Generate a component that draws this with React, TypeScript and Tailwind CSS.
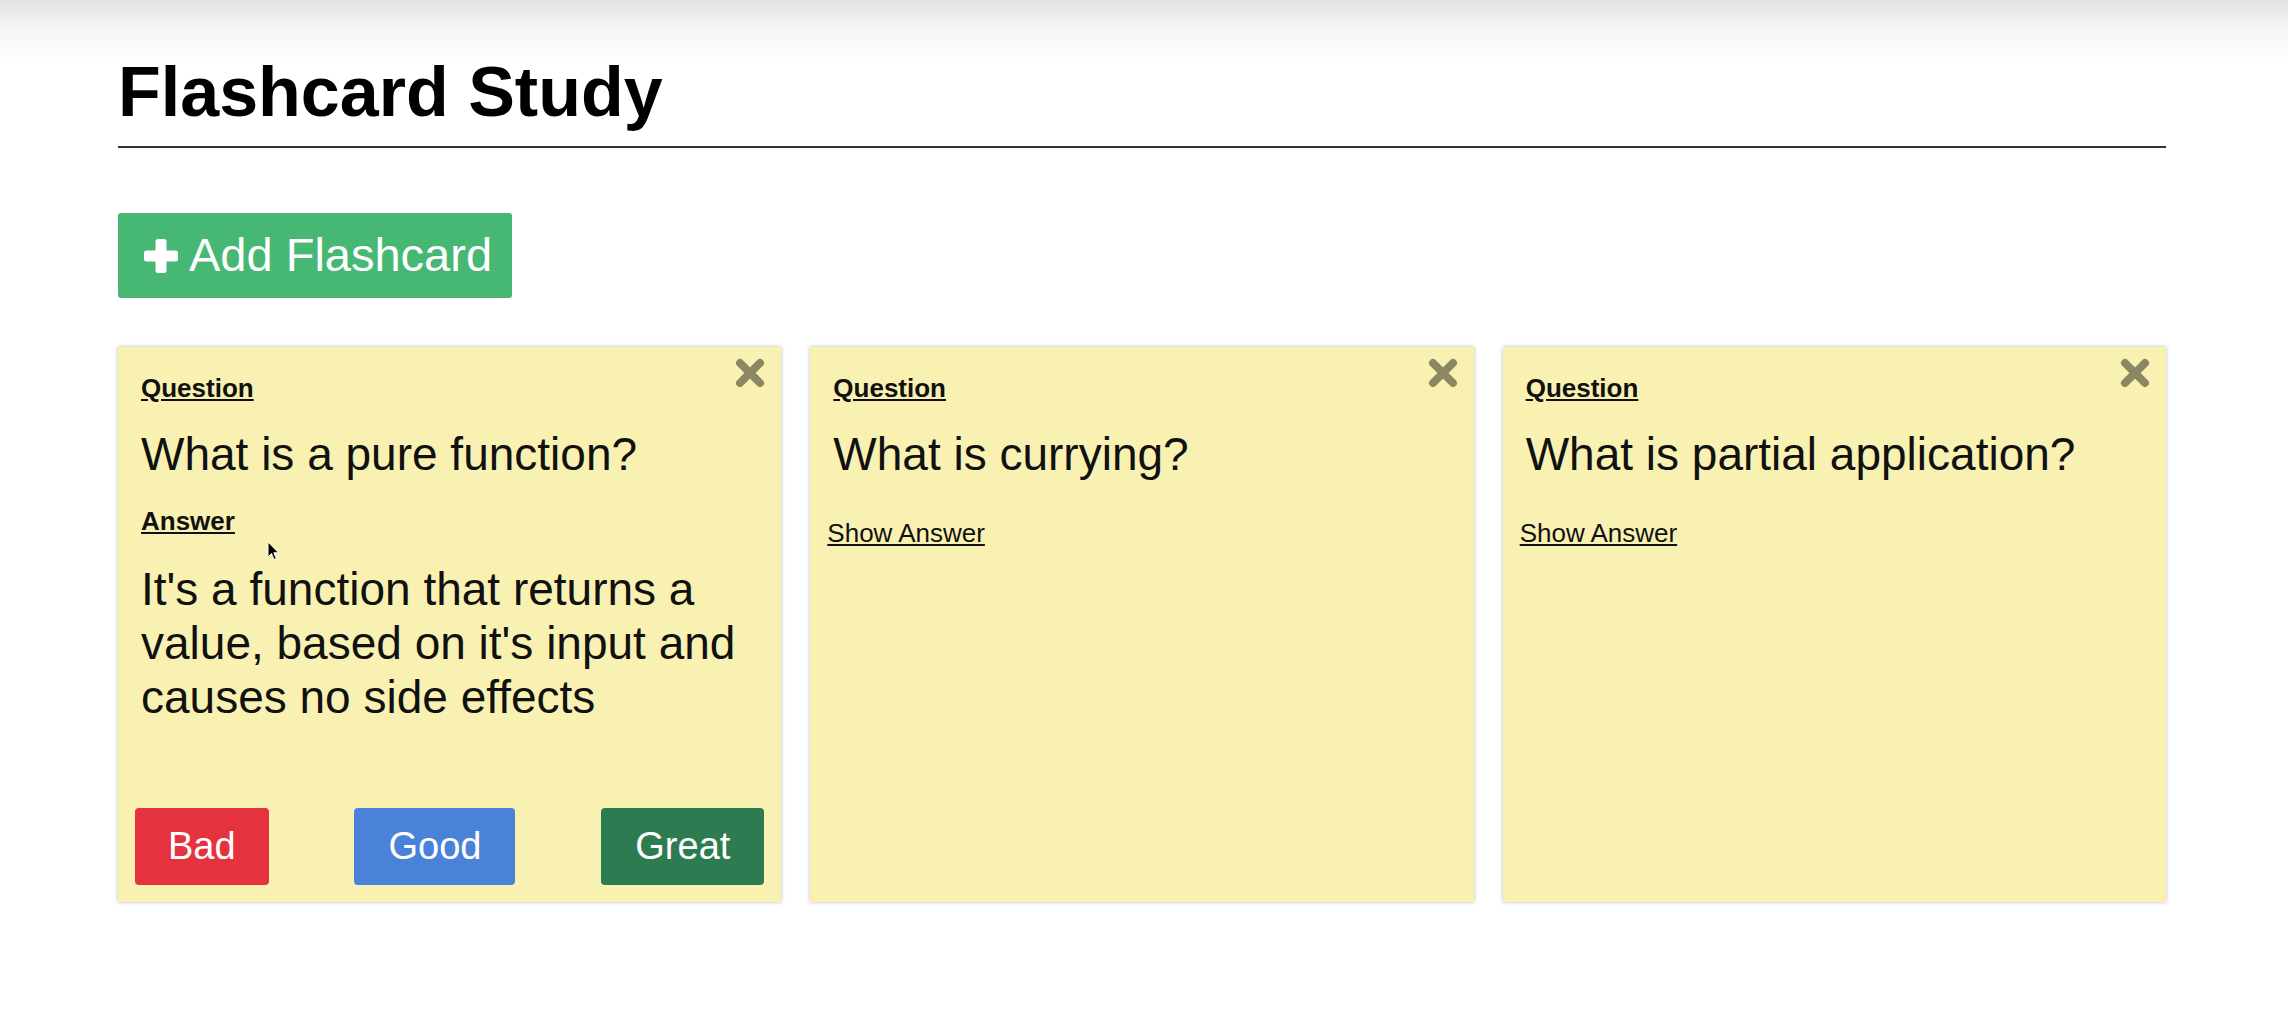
const cards = [
    {
        question: "What is a pure function?",
        answer: "It's a function that returns a value, based on it's input and causes no side effects",
        showAnswer: true,
    },
    { question: "What is currying?", answer: "", showAnswer: false },
    { question: "What is partial application?", answer: "", showAnswer: false },
]

const CloseIcon = () => (
    <svg width="32" height="32" viewBox="0 0 32 32" className="absolute right-[15px] top-[10px]">
        <path d="M6 6 L26 26 M26 6 L6 26" stroke="#8a8761" strokeWidth="8" strokeLinecap="round" />
    </svg>
)

const PlusIcon = () => (
    <svg width="38" height="38" viewBox="0 0 38 38">
        <rect x="13.5" y="2" width="11" height="34" rx="2.5" fill="white" />
        <rect x="2" y="13.5" width="34" height="11" rx="2.5" fill="white" />
    </svg>
)

const Cursor = () => (
    <svg width="13" height="20" viewBox="0 0 13 20" className="absolute left-[149px] top-[194px]">
        <path d="M1 1 L1 16 L4.5 12.5 L7 18.5 L9.3 17.5 L6.8 11.8 L11.5 11.8 Z" fill="black" stroke="white" strokeWidth="1" />
    </svg>
)

const FlashCard = ({ question, answer, showAnswer }: { question: string; answer: string; showAnswer: boolean }) => {
    return (
        <div className="relative bg-[#f8f1b1] p-[17px] shadow-[0_0_4px_rgba(0,0,0,0.28)]">
            <CloseIcon />
            <div className="px-[6px] pt-[9px]">
                <div className="text-[26px] leading-[30px] font-bold underline">Question</div>
                <p className="mt-[24px] text-[46px] leading-[54px]">{question}</p>
                {showAnswer && (
                    <>
                        <div className="mt-[25px] text-[26px] leading-[30px] font-bold underline">Answer</div>
                        <p className="mt-[26px] text-[46px] leading-[54px]">{answer}</p>
                    </>
                )}
            </div>

            {showAnswer ? (
                <div className="mt-[84px] flex justify-between">
                    <button className="h-[77px] rounded-[4px] bg-[#e5323f] px-[33px] text-[38px] text-white">Bad</button>
                    <button className="h-[77px] rounded-[4px] bg-[#4a82da] px-[34px] text-[38px] text-white">Good</button>
                    <button className="h-[77px] rounded-[4px] bg-[#2d7c51] px-[34px] text-[38px] text-white">Great</button>
                </div>
            ) : (
                <a className="mt-[37px] block text-[26px] leading-[30px] underline">Show Answer</a>
            )}

            {showAnswer && <Cursor />}
        </div>
    )
}

export default function App() {
    return (
        <div className="min-h-screen bg-white bg-[linear-gradient(to_bottom,#e2e2e2_0px,#f5f5f5_28px,#ffffff_60px)] font-['Liberation_Sans',Arial,sans-serif] text-[#111]">
            <div className="pl-[118px] pr-[122px] pt-[53px]">
                <h1 className="border-b-2 border-[#333] pb-[14px] text-[70px] leading-[79px] font-bold text-black">Flashcard Study</h1>

                <button className="mt-[65px] flex h-[85px] items-center gap-[9px] rounded-[3px] bg-[#46b874] pl-[24px] pr-[20px] text-[47px] text-white">
                    <PlusIcon />
                    <span>Add Flashcard</span>
                </button>

                <div className="mt-[49px] grid grid-cols-3 gap-[29px]">
                    {cards.map((card) => (
                        <FlashCard key={card.question} {...card} />
                    ))}
                </div>
            </div>
        </div>
    )
}
